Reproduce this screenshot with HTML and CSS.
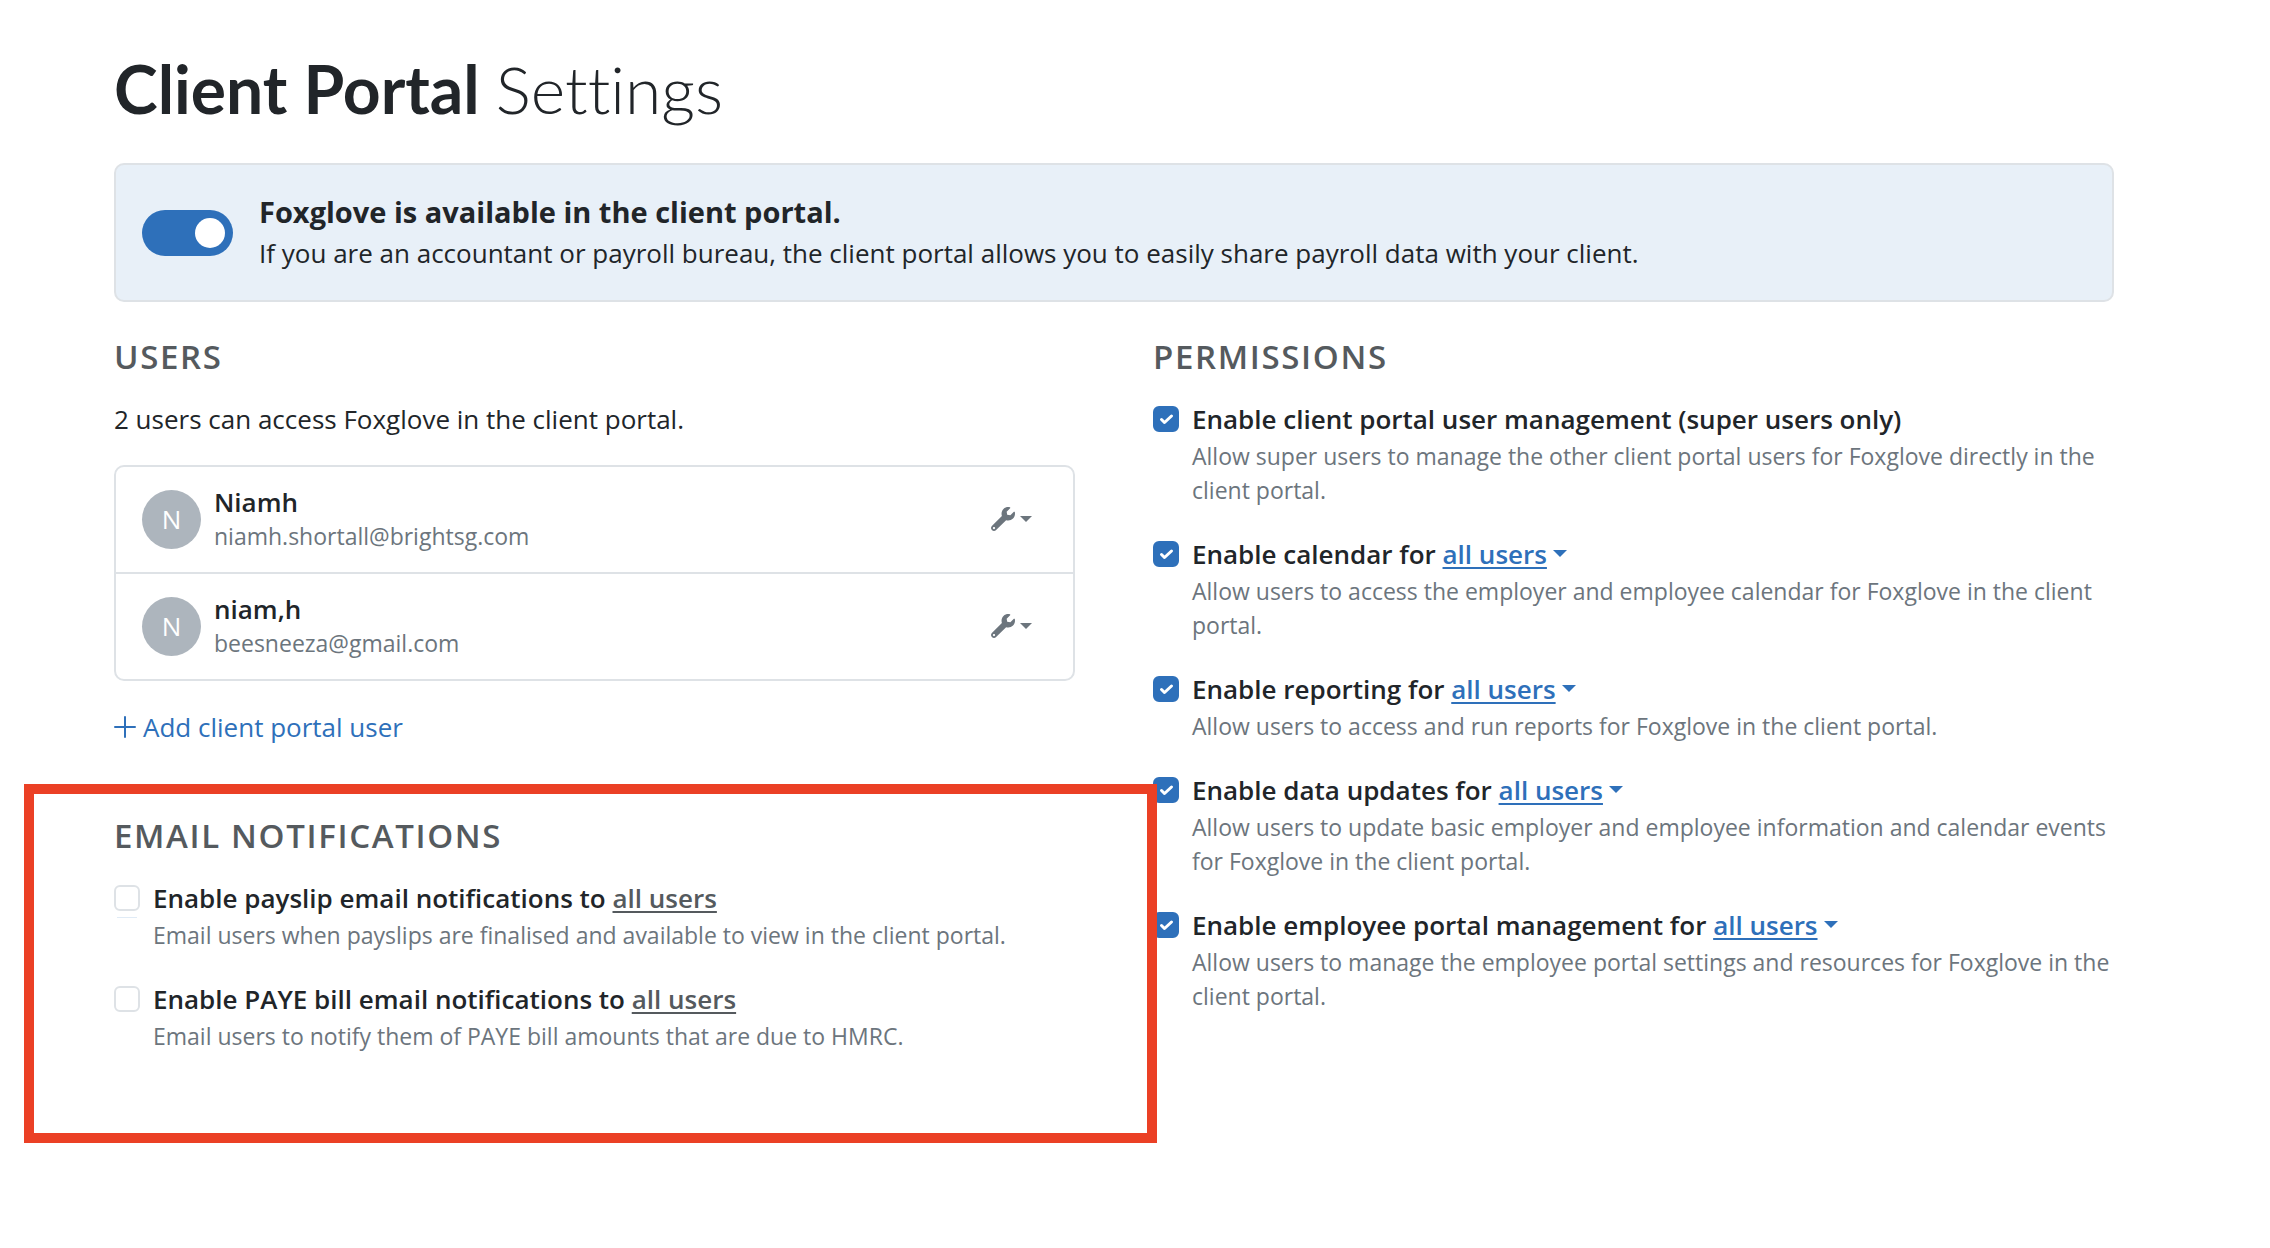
FILE: index.html
```html
<!DOCTYPE html>
<html lang="en">
<head>
    <meta charset="UTF-8">
    <meta name="viewport" content="width=device-width, initial-scale=1.0">
    <title>Client Portal Settings</title>
    <link rel="stylesheet" href="styles.css">
</head>
<body>

    <!-- Shared icons -->
    <svg class="sprite" aria-hidden="true">
        <symbol id="wrench" viewBox="0 0 512 512">
            <path d="M507.73 109.1c-2.24-9.03-13.54-12.09-20.12-5.51l-74.36 74.36-67.88-11.31-11.31-67.88 74.36-74.36c6.62-6.62 3.43-17.9-5.66-20.16-47.38-11.74-99.55.91-136.58 37.93-39.64 39.64-50.55 97.1-34.05 147.2L18.74 402.76c-24.99 24.99-24.99 65.51 0 90.5 24.99 24.99 65.51 24.99 90.5 0l213.21-213.21c50.12 16.71 107.47 5.68 147.37-34.22 37.07-37.07 49.7-89.32 37.91-136.73zM64 472c-13.25 0-24-10.75-24-24 0-13.26 10.75-24 24-24s24 10.74 24 24c0 13.25-10.75 24-24 24z"/>
        </symbol>
        <symbol id="plus" viewBox="0 0 22 22">
            <path d="M11 1v20M1 11h20" fill="none" stroke="currentColor" stroke-width="2" stroke-linecap="round"/>
        </symbol>
    </svg>

    <main class="container">
        <h1>Client Portal <span>Settings</span></h1>

        <div class="banner">
            <input type="checkbox" role="switch" id="portalSwitch" class="switch" checked>
            <div>
                <label for="portalSwitch" class="banner-title">Foxglove is available in the client portal.</label>
                <p class="banner-text">If you are an accountant or payroll bureau, the client portal allows you to easily share payroll data with your client.</p>
            </div>
        </div>

        <div class="columns">
            <div class="column">
                <!-- Users -->
                <section>
                    <h2>Users</h2>
                    <p>2 users can access Foxglove in the client portal.</p>
                    <ul class="user-list">
                        <li class="user">
                            <span class="avatar">N</span>
                            <div class="user-info">
                                <div class="user-name">Niamh</div>
                                <div class="user-email">niamh.shortall@brightsg.com</div>
                            </div>
                            <button type="button" class="user-menu" aria-label="User options">
                                <svg class="icon-wrench"><use href="#wrench"/></svg>
                                <span class="caret"></span>
                            </button>
                        </li>
                        <li class="user">
                            <span class="avatar">N</span>
                            <div class="user-info">
                                <div class="user-name">niam,h</div>
                                <div class="user-email">beesneeza@gmail.com</div>
                            </div>
                            <button type="button" class="user-menu" aria-label="User options">
                                <svg class="icon-wrench"><use href="#wrench"/></svg>
                                <span class="caret"></span>
                            </button>
                        </li>
                    </ul>
                    <a href="#" class="add-user"><svg class="icon-plus"><use href="#plus"/></svg>Add client portal user</a>
                </section>

                <!-- Email notifications -->
                <section class="notifications">
                    <h2>Email notifications</h2>
                    <div class="option option-focus">
                        <input type="checkbox" id="payslip" class="checkbox">
                        <div>
                            <div class="option-title"><label for="payslip">Enable payslip email notifications to</label> <button type="button" class="dropdown" disabled><span>all users</span></button></div>
                            <p class="option-text">Email users when payslips are finalised and available to view in the client portal.</p>
                        </div>
                    </div>
                    <div class="option">
                        <input type="checkbox" id="paye" class="checkbox">
                        <div>
                            <div class="option-title"><label for="paye">Enable PAYE bill email notifications to</label> <button type="button" class="dropdown" disabled><span>all users</span></button></div>
                            <p class="option-text">Email users to notify them of PAYE bill amounts that are due to HMRC.</p>
                        </div>
                    </div>
                </section>
            </div>

            <!-- Permissions -->
            <section class="column">
                <h2>Permissions</h2>
                <div class="option">
                    <input type="checkbox" id="management" class="checkbox" checked>
                    <div>
                        <div class="option-title"><label for="management">Enable client portal user management (super users only)</label></div>
                        <p class="option-text">Allow super users to manage the other client portal users for Foxglove directly in the client portal.</p>
                    </div>
                </div>
                <div class="option">
                    <input type="checkbox" id="calendar" class="checkbox" checked>
                    <div>
                        <div class="option-title"><label for="calendar">Enable calendar for</label> <button type="button" class="dropdown"><span>all users</span><i class="caret"></i></button></div>
                        <p class="option-text">Allow users to access the employer and employee calendar for Foxglove in the client portal.</p>
                    </div>
                </div>
                <div class="option">
                    <input type="checkbox" id="reporting" class="checkbox" checked>
                    <div>
                        <div class="option-title"><label for="reporting">Enable reporting for</label> <button type="button" class="dropdown"><span>all users</span><i class="caret"></i></button></div>
                        <p class="option-text">Allow users to access and run reports for Foxglove in the client portal.</p>
                    </div>
                </div>
                <div class="option">
                    <input type="checkbox" id="updates" class="checkbox" checked>
                    <div>
                        <div class="option-title"><label for="updates">Enable data updates for</label> <button type="button" class="dropdown"><span>all users</span><i class="caret"></i></button></div>
                        <p class="option-text">Allow users to update basic employer and employee information and calendar events for Foxglove in the client portal.</p>
                    </div>
                </div>
                <div class="option">
                    <input type="checkbox" id="employee" class="checkbox" checked>
                    <div>
                        <div class="option-title"><label for="employee">Enable employee portal management for</label> <button type="button" class="dropdown"><span>all users</span><i class="caret"></i></button></div>
                        <p class="option-text">Allow users to manage the employee portal settings and resources for Foxglove in the client portal.</p>
                    </div>
                </div>
            </section>
        </div>
    </main>

</body>
</html>
```
FILE: styles.css
```css
* {
    box-sizing: border-box;
}

body {
    margin: 0;
    background-color: #fff;
    color: #212529;
    font-family: "Open Sans", "Noto Sans", sans-serif;
    font-size: 26px;
    line-height: 42px;
}

h1, h2, p, ul {
    margin: 0;
    padding: 0;
}

button {
    font: inherit;
    background: none;
    border: none;
    padding: 0;
    cursor: pointer;
}

.sprite {
    display: none;
}

.container {
    padding: 51px 156px 160px 114px;
}

h1 {
    font-family: Lato, sans-serif;
    font-size: 66px;
    line-height: 76px;
    font-weight: 700;
    font-variant-ligatures: none;
    margin-bottom: 36px;
}

h1 span {
    font-weight: 300;
}

h2 {
    font-size: 33px;
    line-height: 48px;
    font-weight: 600;
    letter-spacing: 0.05em;
    text-transform: uppercase;
    color: #555a5e;
    margin-bottom: 17px;
}

/* Banner */
.banner {
    display: flex;
    align-items: center;
    gap: 26px;
    min-height: 139px;
    padding: 24px 26px;
    background-color: #e8f0f8;
    border: 2px solid #dee2e6;
    border-radius: 10px;
    margin-bottom: 31px;
}

.switch {
    appearance: none;
    flex: none;
    display: flex;
    justify-content: flex-end;
    width: 91px;
    height: 46px;
    margin: 0;
    padding: 8px;
    border-radius: 23px;
    background-color: #2e70ba;
}

.switch::before {
    content: "";
    width: 30px;
    height: 30px;
    border-radius: 50%;
    background-color: #fff;
}

.switch:not(:checked) {
    justify-content: flex-start;
    background-color: #adb5bd;
}

.banner-title {
    display: block;
    font-size: 29px;
    line-height: 40px;
    font-weight: 700;
}

/* Columns */
.columns {
    display: grid;
    grid-template-columns: 1fr 1fr;
    gap: 78px;
}

/* Users */
.user-list {
    list-style: none;
    margin-top: 25px;
    margin-bottom: 25px;
    border: 2px solid #dee2e6;
    border-radius: 10px;
}

.user {
    display: flex;
    align-items: center;
    gap: 13px;
    padding: 18px 41px 19px 26px;
}

.user + .user {
    border-top: 2px solid #dee2e6;
}

.avatar {
    width: 59px;
    height: 59px;
    border-radius: 50%;
    background-color: #adb5bd;
    color: #fff;
    line-height: 59px;
    text-align: center;
}

.user-info {
    flex: 1;
}

.user-name {
    font-weight: 600;
    line-height: 34px;
}

.user-email {
    color: #6c757d;
    font-size: 23px;
    line-height: 34px;
}

.user-menu {
    display: flex;
    align-items: center;
    gap: 5px;
    color: #6c757d;
}

.icon-wrench {
    width: 24px;
    height: 24px;
    fill: currentColor;
}

.caret {
    display: inline-block;
    border: 6px solid transparent;
    border-top-color: currentColor;
    border-bottom: 0;
}

.add-user {
    display: inline-flex;
    align-items: center;
    gap: 7px;
    color: #2e70ba;
    text-decoration: none;
}

.icon-plus {
    width: 22px;
    height: 22px;
}

/* Email notifications, outlined over the neighbouring content */
.notifications {
    position: relative;
    margin-top: 63px;
}

.notifications::after {
    content: "";
    position: absolute;
    inset: -28px -82px -90px -90px;
    border: 10px solid #eb4025;
    pointer-events: none;
}

/* Options */
.option {
    display: flex;
    gap: 13px;
    margin-bottom: 26px;
}

.option-title {
    font-weight: 600;
}

.option-text {
    margin-top: -1px;
    color: #6c757d;
    font-size: 23px;
    line-height: 34px;
}

.checkbox {
    appearance: none;
    flex: none;
    width: 26px;
    height: 26px;
    margin: 8px 0 0;
    border: 2px solid #dee2e6;
    border-radius: 6px;
    background-color: #fff;
}

.checkbox:checked {
    border-color: #2e70ba;
    background: #2e70ba url("data:image/svg+xml,%3Csvg xmlns='http://www.w3.org/2000/svg' viewBox='0 0 22 22'%3E%3Cpath d='M6.5 11.5l3 3 7-6.500' fill='none' stroke='%23fff' stroke-width='3' stroke-linecap='round' stroke-linejoin='round'/%3E%3C/svg%3E") center / 22px no-repeat;
}

/* Edge of the focus glow under the first tick box */
.option-focus {
    position: relative;
}

.option-focus::before {
    content: "";
    position: absolute;
    top: 40px;
    left: 3px;
    width: 20px;
    height: 1px;
    background-color: #e0ebf6;
}

.dropdown {
    color: #2e70ba;
}

.dropdown span {
    text-decoration: underline;
    text-decoration-thickness: 2px;
    text-underline-offset: 3px;
}

.dropdown .caret {
    margin-left: 6px;
    border-width: 7px 7px 0;
    vertical-align: 7px;
}

.dropdown:disabled {
    color: #555a5e;
    cursor: default;
}
```
